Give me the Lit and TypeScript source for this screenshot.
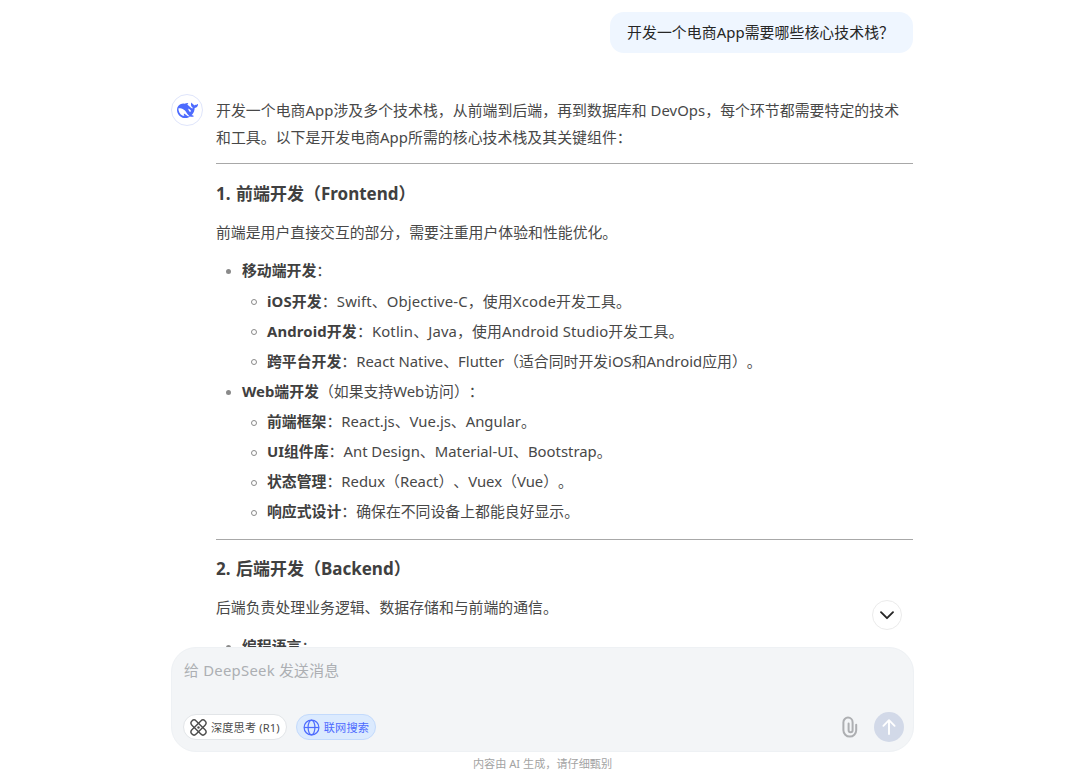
import { LitElement, html, css, nothing } from 'lit';
import { customElement, property, state } from 'lit/decorators.js';
import { classMap } from 'lit/directives/class-map.js';

interface Item {
  label: string;
  text: string;
  wide?: boolean;
  children?: Item[];
}

interface Section {
  title: string;
  intro: string;
  items: Item[];
}

const QUESTION = '开发一个电商App需要哪些核心技术栈？';

const INTRO =
  '开发一个电商App涉及多个技术栈，从前端到后端，再到数据库和 DevOps，每个环节都需要特定的技术和工具。以下是开发电商App所需的核心技术栈及其关键组件：';

const SECTIONS: Section[] = [
  {
    title: '1. 前端开发（Frontend）',
    intro: '前端是用户直接交互的部分，需要注重用户体验和性能优化。',
    items: [
      {
        label: '移动端开发',
        text: '：',
        children: [
          { label: 'iOS开发', text: '：Swift、Objective-C，使用Xcode开发工具。', wide: true },
          { label: 'Android开发', text: '：Kotlin、Java，使用Android Studio开发工具。', wide: true },
          { label: '跨平台开发', text: '：React Native、Flutter（适合同时开发iOS和Android应用）。' },
        ],
      },
      {
        label: 'Web端开发',
        text: '（如果支持Web访问）：',
        children: [
          { label: '前端框架', text: '：React.js、Vue.js、Angular。' },
          { label: 'UI组件库', text: '：Ant Design、Material-UI、Bootstrap。' },
          { label: '状态管理', text: '：Redux（React）、Vuex（Vue）。' },
          { label: '响应式设计', text: '：确保在不同设备上都能良好显示。' },
        ],
      },
    ],
  },
  {
    title: '2. 后端开发（Backend）',
    intro: '后端负责处理业务逻辑、数据存储和与前端的通信。',
    items: [{ label: '编程语言', text: '：' }],
  },
];

@customElement('chat-answer')
class ChatAnswer extends LitElement {
  static styles = css`
    :host {
      display: block;
      color: #484848;
      font-size: 14.86px;
      line-height: 27px;
    }
    p {
      margin: 0;
    }
    hr {
      height: 1px;
      margin: 0;
      border: 0;
      background: #a8a8a8;
    }
    .lead {
      margin-bottom: 12px;
      padding-right: 4px;
      letter-spacing: 0.055px;
    }
    h3 {
      margin: 15.5px 0 12px;
      color: #404040;
      font-size: 17px;
      line-height: 27px;
      font-weight: 700;
      word-spacing: 1px;
    }
    b {
      color: #404040;
    }
    ul {
      margin: 0;
      padding: 0;
      list-style: none;
    }
    .list {
      margin: 10.3px 0 11.6px;
    }
    .row {
      display: flex;
      align-items: center;
      height: 30.15px;
      white-space: nowrap;
    }
    .wide {
      letter-spacing: 0.15px;
    }
    .dot {
      box-sizing: border-box;
      width: 5px;
      height: 5px;
      margin: 2px 11px 0 10px;
      border-radius: 50%;
      background: #8a8a8a;
    }
    .ring {
      width: 6px;
      height: 6px;
      margin: 2px 10px 0 35px;
      border: 1px solid #8a8a8a;
      background: none;
    }
  `;

  @property({ attribute: false }) sections: Section[] = [];
  @property() lead = '';

  render() {
    return html`
      <p class="lead">${this.lead}</p>
      ${this.sections.map(
        (section) => html`
          <hr />
          <h3>${section.title}</h3>
          <p>${section.intro}</p>
          <ul class="list">
            ${section.items.map((item) => this._renderItem(item, false))}
          </ul>
        `
      )}
    `;
  }

  _renderItem(item: Item, nested: boolean): unknown {
    return html`
      <li>
        <div class=${classMap({ row: true, wide: !!item.wide })}>
          <span class=${classMap({ dot: true, ring: nested })}></span>
          <span><b>${item.label}</b>${item.text}</span>
        </div>
        ${item.children
          ? html`<ul>${item.children.map((child) => this._renderItem(child, true))}</ul>`
          : nothing}
      </li>
    `;
  }
}

@customElement('chat-composer')
class ChatComposer extends LitElement {
  static styles = css`
    :host {
      display: flex;
      flex-direction: column;
      justify-content: space-between;
      box-sizing: border-box;
      height: 105px;
      padding: 9px 9px 9px 12px;
      border: 1px solid #eef1f4;
      border-radius: 25px;
      background: #f3f5f7;
    }
    .placeholder {
      color: #acafb3;
      font-size: 14.86px;
      line-height: 26px;
      letter-spacing: 0.25px;
    }
    .bar {
      display: flex;
      align-items: center;
      height: 30px;
    }
    .pill {
      display: flex;
      align-items: center;
      box-sizing: border-box;
      height: 26px;
      margin: 0 9px 0 -1px;
      padding: 0 6px;
      gap: 4px;
      border: 1px solid #e2e5e8;
      border-radius: 13px;
      background: #fff;
      color: #4c4c4c;
      font-size: 11.2px;
      letter-spacing: 0.12px;
      white-space: nowrap;
      cursor: pointer;
    }
    .pill + .pill {
      margin-left: 0;
    }
    .active {
      border-color: #c3dafc;
      background: #dbeafe;
      color: #4d6bfe;
    }
    .clip {
      margin-left: auto;
      margin-right: 16px;
    }
    .send {
      display: flex;
      align-items: center;
      justify-content: center;
      width: 30px;
      height: 30px;
      border-radius: 50%;
      background: #d2d9e8;
    }
    svg {
      display: block;
      flex: none;
    }
  `;

  @state() thinking = false;
  @state() searching = true;

  render() {
    return html`
      <div class="placeholder">给 DeepSeek 发送消息</div>
      <div class="bar">
        <div
          class=${classMap({ pill: true, active: this.thinking })}
          @click=${() => (this.thinking = !this.thinking)}
        >
          <svg width="17" height="17" viewBox="0 0 17 17" fill="none" stroke="currentColor" stroke-width="1.4">
            <rect x="-0.8" y="5.5" width="18.6" height="6" rx="3" transform="rotate(45 8.5 8.5)" />
            <rect x="-0.8" y="5.5" width="18.6" height="6" rx="3" transform="rotate(-45 8.5 8.5)" />
            <circle cx="8.5" cy="8.5" r="1.2" fill="currentColor" stroke="none" />
          </svg>
          <span>深度思考 (R1)</span>
        </div>
        <div
          class=${classMap({ pill: true, active: this.searching })}
          @click=${() => (this.searching = !this.searching)}
        >
          <svg width="17" height="17" viewBox="0 0 17 17" fill="none" stroke="currentColor" stroke-width="1.2">
            <circle cx="8.5" cy="8.5" r="7.4" />
            <ellipse cx="8.5" cy="8.5" rx="3.4" ry="7.4" />
            <path d="M1.1 8.5h14.8" />
          </svg>
          <span>联网搜索</span>
        </div>
        <svg class="clip" width="17" height="22" viewBox="0 0 17 22" fill="none" stroke="#adafb2" stroke-width="2" stroke-linecap="round">
          <path d="M15.2 8.8v5.4a6.4 6.4 0 0 1-12.8 0V6.2a4.6 4.6 0 0 1 9.2 0v8a2 2 0 0 1-4 0V7.6" />
        </svg>
        <div class="send">
          <svg width="16" height="18" viewBox="0 0 16 18" fill="none" stroke="#fff" stroke-width="1.9" stroke-linecap="round" stroke-linejoin="round">
            <path d="M8 16V2.2M2.4 7.8L8 2.2l5.6 5.6" />
          </svg>
        </div>
      </div>
    `;
  }
}

@customElement('app-root')
class AppRoot extends LitElement {
  static styles = css`
    :host {
      display: flex;
      flex-direction: column;
      position: relative;
      box-sizing: border-box;
      height: 773px;
      padding: 0 166px 0 171px;
      overflow: hidden;
      background: #fff;
      font-family: 'Noto Sans', 'Noto Sans CJK SC', sans-serif;
      text-spacing-trim: space-all;
    }
    .thread {
      flex: none;
      box-sizing: border-box;
      height: 647px;
      padding: 12px 1px 0 0;
      overflow: hidden;
    }
    .question {
      box-sizing: border-box;
      width: 303px;
      height: 41px;
      margin: 0 0 44px auto;
      padding: 0 17px;
      border-radius: 14px;
      background: #eff6ff;
      color: #262626;
      font-size: 14.86px;
      line-height: 41px;
      letter-spacing: 0.08px;
      white-space: nowrap;
    }
    .reply {
      display: flex;
      gap: 13px;
    }
    .avatar {
      display: flex;
      flex: none;
      align-items: center;
      justify-content: center;
      box-sizing: border-box;
      width: 32px;
      height: 32px;
      margin-top: -3px;
      border: 1px solid #dfe5fb;
      border-radius: 50%;
    }
    .answer {
      flex: 1;
      min-width: 0;
    }
    .composer {
      flex: none;
    }
    .note {
      margin-top: 3px;
      color: #a3a3a3;
      font-size: 11.15px;
      line-height: 17px;
      text-align: center;
    }
    .to-bottom {
      position: absolute;
      left: 872px;
      top: 600px;
      display: flex;
      align-items: center;
      justify-content: center;
      box-sizing: border-box;
      width: 30px;
      height: 30px;
      border: 1px solid #ebebeb;
      border-radius: 50%;
      background: #fff;
    }
  `;

  render() {
    return html`
      <div class="thread">
        <div class="question">${QUESTION}</div>
        <div class="reply">
          <div class="avatar">
            <svg width="21" height="21" viewBox="0 0 24 24" fill="#4d6bfe">
              <path
                d="M23.748 4.482c-.254-.124-.364.113-.512.234-.051.039-.094.09-.137.136-.372.397-.806.657-1.373.626-.829-.046-1.537.214-2.163.848-.133-.782-.575-1.248-1.247-1.548-.352-.156-.708-.311-.955-.65-.172-.241-.219-.51-.305-.774-.055-.16-.11-.323-.293-.35-.2-.031-.278.136-.356.276-.313.572-.434 1.202-.422 1.84.027 1.436.633 2.58 1.838 3.393.137.093.172.187.129.323-.082.28-.18.552-.266.833-.055.179-.137.217-.329.14a5.526 5.526 0 01-1.736-1.18c-.857-.828-1.631-1.742-2.597-2.458a11.365 11.365 0 00-.689-.471c-.985-.957.13-1.743.388-1.836.27-.098.093-.432-.779-.428-.872.004-1.67.295-2.687.684a3.055 3.055 0 01-.465.137 9.597 9.597 0 00-2.883-.102c-1.885.21-3.39 1.102-4.497 2.623C.082 8.606-.231 10.684.152 12.85c.403 2.284 1.569 4.175 3.36 5.653 1.858 1.533 3.997 2.284 6.438 2.14 1.482-.085 3.133-.284 4.994-1.86.47.234.962.327 1.78.397.63.059 1.236-.03 1.705-.128.735-.156.684-.837.419-.961-2.155-1.004-1.682-.595-2.113-.926 1.096-1.296 2.746-2.642 3.392-7.003.05-.347.007-.565 0-.845-.004-.17.035-.237.23-.256a4.173 4.173 0 001.545-.475c1.396-.763 1.96-2.015 2.093-3.517.02-.23-.004-.467-.247-.588zM11.581 18c-2.089-1.642-3.102-2.183-3.52-2.16-.392.024-.321.471-.235.763.09.288.207.486.371.739.114.167.192.416-.113.603-.673.416-1.842-.14-1.897-.167-1.361-.802-2.5-1.86-3.301-3.307-.774-1.393-1.224-2.887-1.298-4.482-.02-.386.093-.522.477-.592a4.696 4.696 0 011.529-.039c2.132.312 3.946 1.265 5.468 2.774.868.86 1.525 1.887 2.202 2.891.72 1.066 1.494 2.082 2.48 2.914.348.292.625.514.891.677-.802.09-2.14.11-3.054-.614zm1-6.44a.306.306 0 01.415-.287.302.302 0 01.2.288.306.306 0 01-.31.307.303.303 0 01-.304-.308zm3.11 1.596c-.2.081-.399.151-.59.16a1.245 1.245 0 01-.798-.254c-.274-.23-.47-.358-.552-.758a1.73 1.73 0 01.016-.588c.07-.327-.008-.537-.239-.727-.187-.156-.426-.199-.688-.199a.559.559 0 01-.254-.078c-.11-.054-.2-.19-.114-.358.028-.054.16-.186.192-.21.356-.202.767-.136 1.146.016.352.144.618.408 1.001.782.391.451.462.576.685.914.176.265.336.537.445.848.067.195-.019.354-.25.452z"
              />
            </svg>
          </div>
          <chat-answer class="answer" .lead=${INTRO} .sections=${SECTIONS}></chat-answer>
        </div>
      </div>
      <chat-composer class="composer"></chat-composer>
      <div class="note">内容由 AI 生成，请仔细甄别</div>
      <div class="to-bottom">
        <svg width="16" height="16" viewBox="0 0 16 16" fill="none" stroke="#262626" stroke-width="1.9" stroke-linecap="round" stroke-linejoin="round">
          <path d="M2 5.2l6 6 6-6" />
        </svg>
      </div>
    `;
  }
}
